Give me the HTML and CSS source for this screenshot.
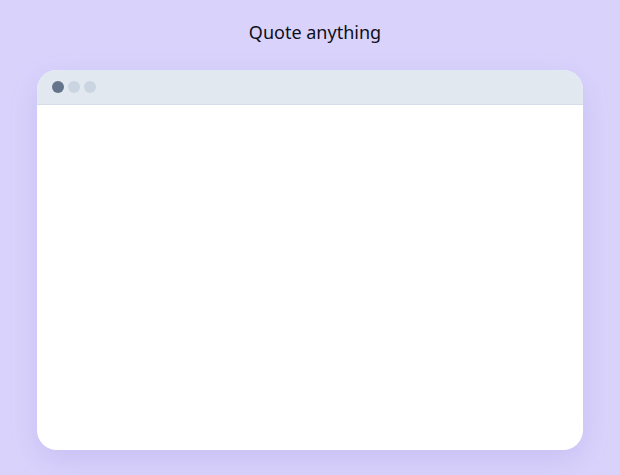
FILE: index.html
```html
<!DOCTYPE html>
<html lang="en">
<head>
    <meta charset="UTF-8">
    <meta name="viewport" content="width=device-width, initial-scale=1.0">
    <title>Quote anything</title>
    <link rel="stylesheet" href="styles.css">
</head>
<body>

<h1 class="page-title">Quote anything</h1>

<div class="window">
    <div class="window-bar">
        <span class="dot dot-dark"></span>
        <span class="dot"></span>
        <span class="dot"></span>
    </div>
    <div class="window-body"></div>
</div>

</body>
</html>
```

FILE: styles.css
```css
/* Page background */
body {
    margin: 0;
    height: 475px;
    background: #d9d3fc;
    font-family: "Noto Sans", sans-serif;
    display: flex;
    flex-direction: column;
    align-items: center;
    overflow: hidden;
}

/* Heading */
.page-title {
    margin: 19px 0 0 10px;
    font-size: 18px;
    font-weight: 400;
    line-height: 26px;
    color: #0f0f1a;
}

/* Browser window mockup */
.window {
    margin-top: 25px;
    width: 546px;
    height: 380px;
    background: #fff;
    border-radius: 20px;
    overflow: hidden;
    box-shadow: 0 10px 30px rgba(80, 60, 180, 0.12);
    display: flex;
    flex-direction: column;
}

.window-bar {
    height: 34px;
    background: #e2e8f0;
    border-bottom: 1px solid #d5dce8;
    display: flex;
    align-items: center;
    gap: 4px;
    padding: 0 15px;
}

.dot {
    width: 12px;
    height: 12px;
    border-radius: 50%;
    background: #cbd5e1;
}

.dot-dark {
    background: #64748b;
}

.window-body {
    flex: 1;
}
```
